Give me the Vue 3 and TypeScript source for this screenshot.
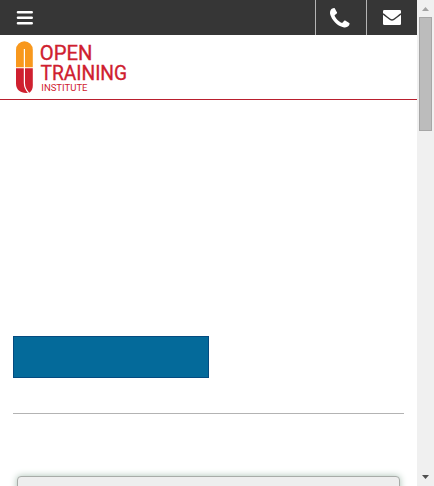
<script setup lang="ts">
interface LogoLine {
  text: string
  x: number
  y: number
  width: number
  size: number
  stroke: number
}

const logoLines: LogoLine[] = [
  { text: 'OPEN', x: 23.8, y: 18.7, width: 52.6, size: 21, stroke: 0.35 },
  { text: 'TRAINING', x: 24.5, y: 38.7, width: 86.6, size: 21, stroke: 0.35 },
  { text: 'INSTITUTE', x: 25.3, y: 49.8, width: 46.2, size: 9.4, stroke: 0 },
]
</script>

<template>
  <div class="window">
    <main class="page">
      <nav class="topbar">
        <button class="menu" aria-label="Menu">
          <svg width="18" height="16" viewBox="0 0 18 16">
            <path d="M2 2.300H15.700M2 7.700H15.700M2 13.200H15.700" />
          </svg>
        </button>
        <a class="action" aria-label="Call">
          <svg width="19.500" height="19.500" viewBox="0 0 1408 1408">
            <path d="M1408 1112q0 27-10 70.500t-21 68.500q-21 50-122 106-94 51-186 51-27 0-53-3.500t-57.500-12.500-47-14.500-55.500-20.500-49-18q-98-35-175-83-127-79-264-216t-216-264q-48-77-83-175-3-9-18-49t-20.500-55.500-14.500-47-12.500-57.500-3.500-53q0-92 51-186 56-101 106-122 25-11 68.500-21t70.500-10q14 0 21 3 18 6 53 76 11 19 30 54t35 63.500 31 53.500q3 4 17.500 25t21.500 35.500 7 28.500q0 20-28.500 50t-62 55-62 53-28.500 46q0 9 5 22.500t8.500 20.500 14 24 11.500 19q76 137 174 235t235 174q2 1 19 11.500t24 14 20.500 8.500 22.500 5q18 0 46-28.500t53-62 55-62 50-28.500q14 0 28.500 7t35.500 21.500 25 17.500q25 15 53.500 31t63.500 35 54 30q70 35 76 53 3 7 3 21z" />
          </svg>
        </a>
        <a class="action mail" aria-label="Email">
          <svg width="18" height="15" viewBox="0 0 18 15">
            <rect width="18" height="15" rx="1.200" />
            <path class="flap" d="M0 3.800C2 5.700 4.300 7.100 6.300 8.700C8 10.400 10 10.400 11.700 8.700C13.700 7.100 16 5.700 18 3.800" />
          </svg>
        </a>
      </nav>
      <header class="brand">
        <svg width="114" height="56" viewBox="0 0 114 56" aria-label="Open Training Institute">
          <path class="orange" d="M0 26.200V8.900A8.400 8.600 0 0 1 16.800 8.900V26.200Z" />
          <path class="red" d="M0 27.200H16.800V44.500C16.800 47.500 15.800 49.800 13.800 51.500C6 53 0 50 0 42.500Z" />
          <path class="cut" d="M8.400 8V42Q8.400 47.500 12.600 51.800" />
          <text
            v-for="line in logoLines"
            :key="line.text"
            :x="line.x"
            :y="line.y"
            :font-size="line.size"
            :stroke-width="line.stroke"
            :textLength="line.width"
            lengthAdjust="spacingAndGlyphs"
          >{{ line.text }}</text>
        </svg>
      </header>
      <section class="content">
        <div class="cta"></div>
        <hr />
        <div class="panel"></div>
      </section>
    </main>
    <aside class="scrollbar">
      <svg width="7" height="4" viewBox="0 0 7 4"><path fill="#a3a3a3" d="M0 4L3.500 0L7 4Z" /></svg>
      <div class="thumb"></div>
      <svg class="down" width="7" height="4" viewBox="0 0 7 4"><path fill="#505050" d="M0 0H7L3.500 4Z" /></svg>
    </aside>
  </div>
</template>

<style>
body {
  margin: 0;
  overflow: hidden;
}
</style>

<style scoped>
* {
  box-sizing: border-box;
}
.window {
  display: flex;
  height: 486px;
  overflow: hidden;
  background: #fff;
  font-family: Roboto, 'Liberation Sans', sans-serif;
}
.page {
  width: 417px;
  height: 486px;
  overflow: hidden;
}
.topbar {
  display: flex;
  height: 35px;
  background: #363636;
}
.topbar svg {
  display: block;
  fill: #fff;
}
.menu {
  display: flex;
  flex: 1;
  padding: 10px 0 0 16px;
  border: 0;
  background: none;
}
.menu path {
  stroke: #fff;
  stroke-width: 2.6;
  stroke-linecap: round;
}
.action {
  width: 51px;
  padding: 8px 0 0 14.4px;
  border-left: 1px solid #b4b4b4;
}
.mail {
  padding: 10px 0 0 16px;
}
.topbar .flap {
  fill: none;
  stroke: #363636;
  stroke-width: 1.4;
}
.brand {
  height: 65px;
  padding: 6px 0 0 16px;
  border-bottom: 1px solid #b91f2e;
}
.brand svg {
  display: block;
  overflow: visible;
}
.brand text {
  fill: #cf202f;
  stroke: #cf202f;
}
.red {
  fill: #cf202f;
}
.orange {
  fill: #f8981d;
}
.cut {
  fill: none;
  stroke: #fff;
  stroke-width: 1.2;
}
.content {
  padding: 236px 13px 0;
}
.cta {
  width: 196px;
  height: 42px;
  background: #046a9a;
  border: 1px solid #044b80;
}
hr {
  height: 1px;
  margin: 35px 0 62px;
  border: 0;
  background: #b3b3b3;
}
.panel {
  height: 40px;
  margin: 0 4px;
  border: 1px solid #a8aca8;
  border-radius: 4px;
  background: #eee;
  box-shadow: 0 0 7px #a9c0b3;
}
.scrollbar {
  display: flex;
  flex-direction: column;
  align-items: center;
  width: 17px;
  padding: 7px 0;
  background: #f0f0f0;
}
.thumb {
  width: 13px;
  height: 114px;
  margin-top: 6px;
  border: 1px solid #a6a6a6;
  background: #bcbcbc;
}
.down {
  margin-top: auto;
}
</style>
